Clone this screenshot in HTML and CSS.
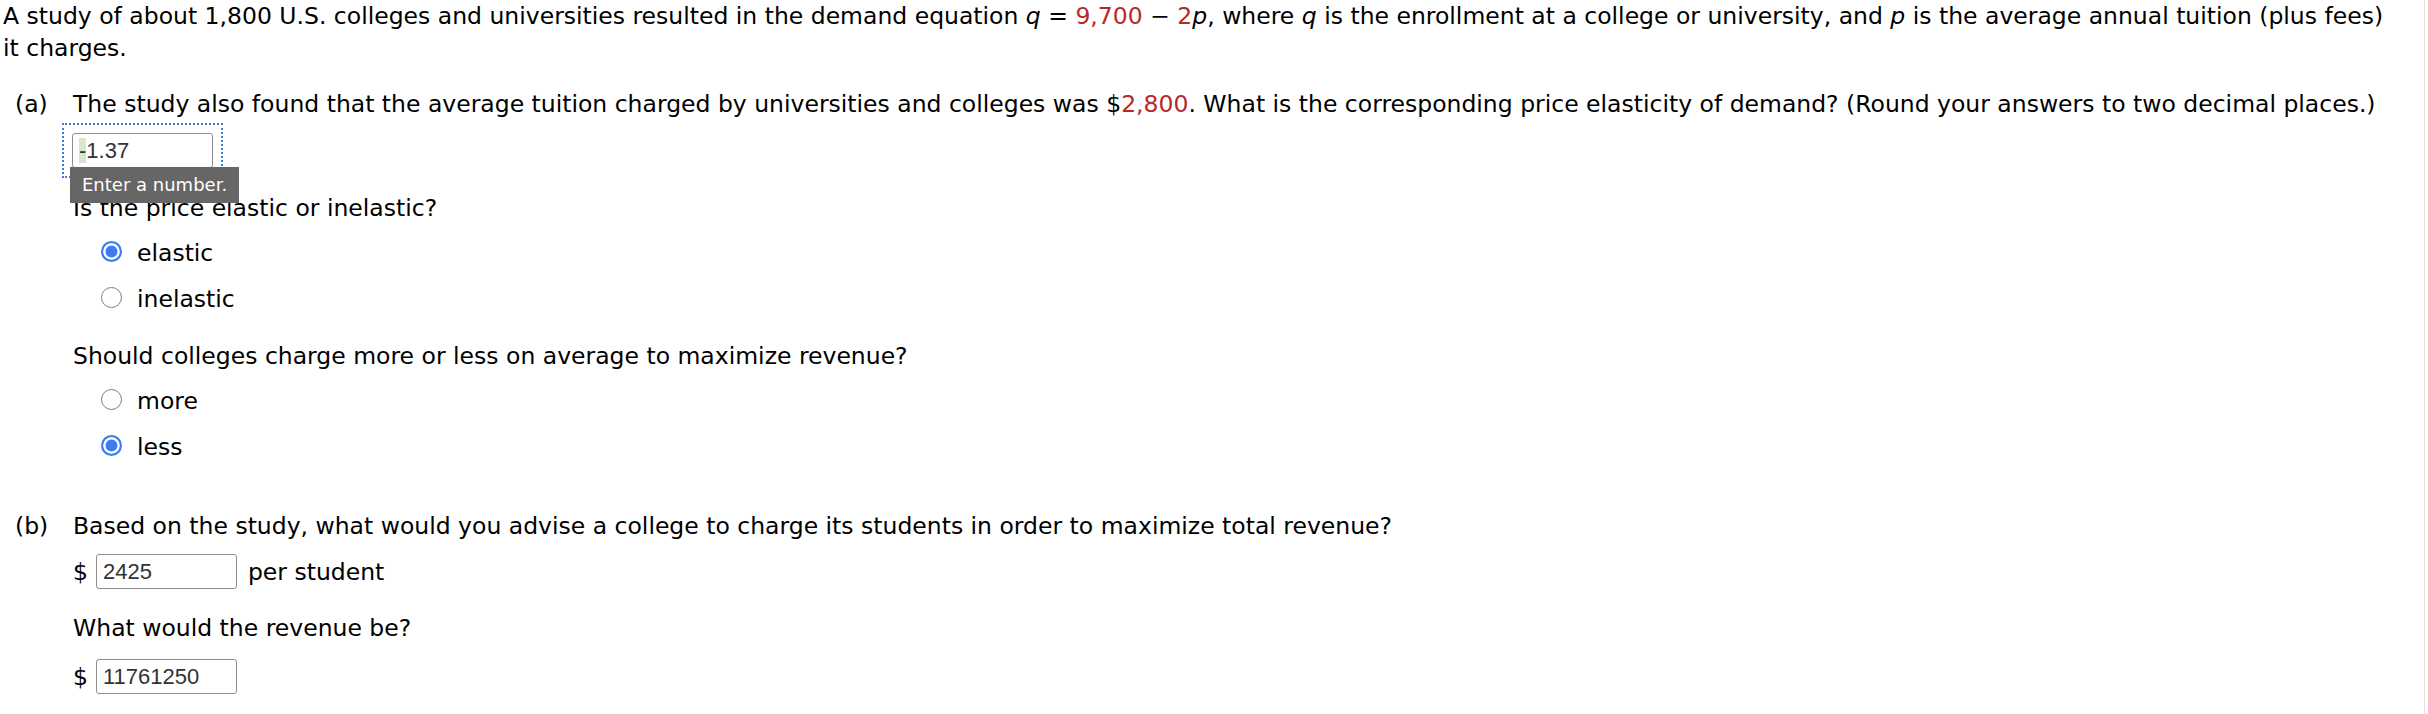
FILE: index.html
```html
<!DOCTYPE html>
<html lang="en">
<head>
<meta charset="utf-8">
<title>Price elasticity question</title>
<link rel="stylesheet" href="styles.css">
</head>
<body>
<div class="page">
  <p class="intro">A study of about 1,800 U.S. colleges and universities resulted in the demand equation <i>q</i> = <span class="red">9,700</span> &minus; <span class="red">2</span><i>p</i>, where <i>q</i> is the enrollment at a college or university, and <i>p</i> is the average annual tuition (plus fees) it charges.</p>

  <div class="part part-a">
    <span class="label">(a)</span>
    <div class="content">
      <p class="q">The study also found that the average tuition charged by universities and colleges was $<span class="red">2,800</span>. What is the corresponding price elasticity of demand? (Round your answers to two decimal places.)</p>
      <div class="focus">
        <span class="field"><span class="hl">-</span>1.37</span>
        <span class="tip">Enter a number.</span>
      </div>
      <p class="q q-after-focus">Is the price elastic or inelastic?</p>
      <div class="choices">
        <div class="choice"><span class="radio checked"></span><span class="opt">elastic</span></div>
        <div class="choice"><span class="radio"></span><span class="opt">inelastic</span></div>
      </div>
      <p class="q q-gap">Should colleges charge more or less on average to maximize revenue?</p>
      <div class="choices">
        <div class="choice"><span class="radio"></span><span class="opt">more</span></div>
        <div class="choice"><span class="radio checked"></span><span class="opt">less</span></div>
      </div>
    </div>
  </div>

  <div class="part part-b">
    <span class="label">(b)</span>
    <div class="content">
      <p class="q">Based on the study, what would you advise a college to charge its students in order to maximize total revenue?</p>
      <div class="answer-row"><span class="cur">$</span><span class="field">2425</span><span class="unit">per student</span></div>
      <p class="q q-sub">What would the revenue be?</p>
      <div class="answer-row answer-last"><span class="cur">$</span><span class="field">11761250</span></div>
    </div>
  </div>
</div>
</body>
</html>
```

FILE: styles.css
```css
html, body {
  margin: 0;
  padding: 0;
  background: #ffffff;
}

body {
  font-family: Verdana, "DejaVu Sans", sans-serif;
  font-size: 23.5px;
  line-height: 32px;
  color: #000000;
}

.page {
  box-sizing: border-box;
  width: 2425px;
  min-height: 714px;
  padding: 0 30px 0 3px;
  border-right: 1px solid #e2e2e2;
}

p {
  margin: 0;
}

.red {
  color: #b8282b;
}

.intro {
  margin-bottom: 24px;
}

.part {
  display: grid;
  grid-template-columns: 70px 1fr;
}

.label {
  padding-left: 12px;
}

.part-b {
  margin-top: 47px;
}

.focus {
  position: relative;
  display: inline-flex;
  margin: 3px 0 0 -11px;
  padding: 8px;
  border: 2px dotted #3b7ddd;
}

.field {
  display: inline-flex;
  align-items: center;
  box-sizing: border-box;
  width: 141px;
  height: 35px;
  padding: 0 6px;
  border: 1px solid #8e8e8e;
  border-radius: 3px;
  background: #ffffff;
  font-family: Arial, "Liberation Sans", sans-serif;
  font-size: 22px;
  color: #333333;
}

.hl {
  background: #d5e8cf;
  line-height: 25px;
}

.tip {
  position: absolute;
  left: 6px;
  top: 42px;
  padding: 0 12px;
  height: 36px;
  line-height: 36px;
  background: #666666;
  color: #ffffff;
  font-size: 18px;
  white-space: nowrap;
}

.q-after-focus {
  margin-top: 14px;
}

.q-gap {
  margin-top: 25px;
}

.choices {
  display: flex;
  flex-direction: column;
  gap: 14px;
  margin-top: 13px;
  padding-left: 28px;
}

.choice {
  display: flex;
  align-items: flex-start;
}

.radio {
  box-sizing: border-box;
  width: 21px;
  height: 21px;
  margin-top: 4px;
  border-radius: 50%;
  border: 1.5px solid #7b7b7b;
  background: #ffffff;
}

.radio.checked {
  border: 2px solid #3b7cf5;
  background: #3b7cf5;
  box-shadow: inset 0 0 0 2.5px #ffffff;
}

.opt {
  margin-left: 15px;
}

.answer-row {
  display: flex;
  align-items: center;
  margin-top: 12px;
  height: 35px;
}

.cur {
  margin-right: 8px;
}

.unit {
  margin-left: 11px;
}

.q-sub {
  margin-top: 23px;
}

.answer-last {
  margin-top: 15px;
}
```
